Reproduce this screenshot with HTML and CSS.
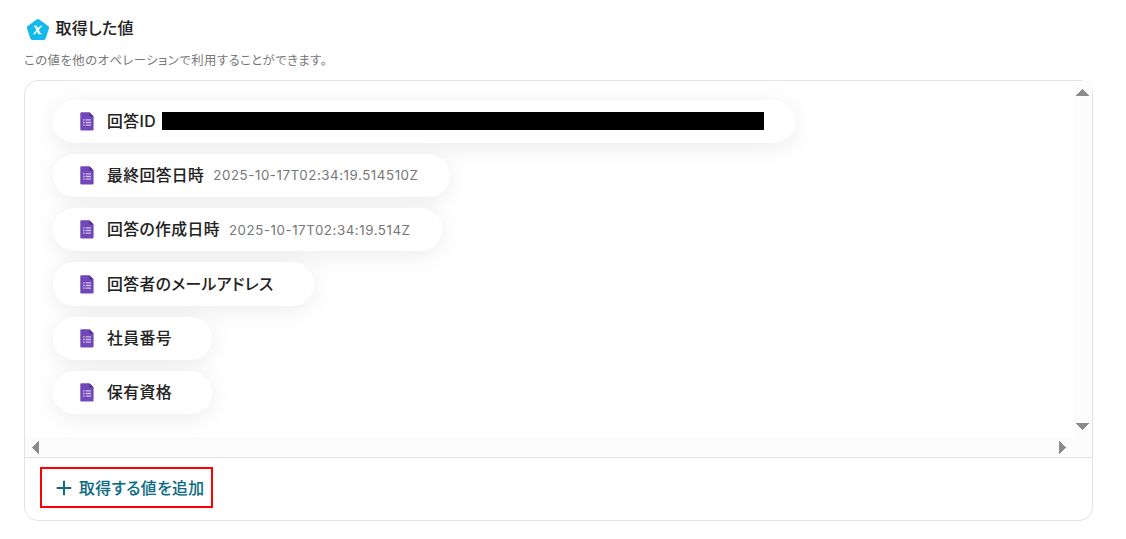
FILE: index.html
```html
<!DOCTYPE html>
<html lang="ja">
<head>
  <meta charset="UTF-8" />
  <meta name="viewport" content="width=device-width, initial-scale=1.0"/>
  <title>取得した値</title>
  <link rel="stylesheet" href="styles.css">
</head>

<body>
  <!-- shared form icon -->
  <svg class="sprite" aria-hidden="true">
    <symbol id="form-icon" viewBox="0 0 14 19">
      <path d="M1.6 0.3H9.4L13.6 4.5V17.2Q13.6 18.6 12.2 18.6H1.6Q0.3 18.6 0.3 17.2V1.6Q0.3 0.3 1.6 0.3Z" fill="#7248b9"/>
      <path d="M9.4 0.3L13.6 4.5H9.4Z" fill="#50318f"/>
      <path d="M3 7.2H4.6V8.6H3ZM5.6 7.2H11V8.6H5.6ZM3 9.8H4.6V11.2H3ZM5.6 9.8H11V11.2H5.6ZM3 12.4H4.6V13.8H3ZM5.6 12.4H11V13.8H5.6Z" fill="#cdbfe8"/>
    </symbol>
  </svg>

  <div class="container">
    <div class="heading">
      <svg class="heading-icon" width="24" height="24" viewBox="0 0 24 24">
        <path d="M10.7 1.5Q12 0.6 13.3 1.5L22.2 7.9Q23.5 8.8 23 10.3L19.7 20.6Q19.2 22 17.7 22H6.3Q4.8 22 4.3 20.6L1 10.3Q0.5 8.8 1.8 7.9Z" fill="#14b9ec"/>
        <text class="variable-mark" x="11.4" y="16.4" text-anchor="middle">x</text>
      </svg>
      <h1>取得した値</h1>
    </div>
    <p class="description">この値を他のオペレーションで利用することができます。</p>

    <div class="panel">
      <div class="scroll-area">
        <div class="values">
          <div class="value-pill">
            <svg class="form-icon"><use href="#form-icon"/></svg>
            <span class="label">回答ID</span>
            <span class="masked"></span>
          </div>
          <div class="value-pill">
            <svg class="form-icon"><use href="#form-icon"/></svg>
            <span class="label">最終回答日時</span>
            <span class="sample">2025-10-17T02:34:19.514510Z</span>
          </div>
          <div class="value-pill">
            <svg class="form-icon"><use href="#form-icon"/></svg>
            <span class="label">回答の作成日時</span>
            <span class="sample">2025-10-17T02:34:19.514Z</span>
          </div>
          <div class="value-pill">
            <svg class="form-icon"><use href="#form-icon"/></svg>
            <span class="label">回答者のメールアドレス</span>
            <span class="sample"></span>
          </div>
          <div class="value-pill">
            <svg class="form-icon"><use href="#form-icon"/></svg>
            <span class="label">社員番号</span>
            <span class="sample"></span>
          </div>
          <div class="value-pill">
            <svg class="form-icon"><use href="#form-icon"/></svg>
            <span class="label">保有資格</span>
            <span class="sample"></span>
          </div>
        </div>
        <div class="scrollbar-y">
          <svg width="13" height="7" viewBox="0 0 13 7"><path d="M0 7L6.5 0L13 7Z"/></svg>
          <svg width="13" height="7" viewBox="0 0 13 7"><path d="M0 0H13L6.5 7Z"/></svg>
        </div>
        <div class="scrollbar-x">
          <svg width="7" height="13" viewBox="0 0 7 13"><path d="M7 0V13L0 6.5Z"/></svg>
          <svg width="7" height="13" viewBox="0 0 7 13"><path d="M0 0L7 6.5L0 13Z"/></svg>
        </div>
      </div>
      <div class="panel-footer">
        <button class="add-btn">
          <svg width="16" height="16" viewBox="0 0 16 16"><path d="M8 0.7V15.3M0.7 8H15.3" stroke="currentColor" stroke-width="2"/></svg>
          取得する値を追加
        </button>
      </div>
    </div>
  </div>
</body>
</html>
```
FILE: styles.css
```css
* {
  box-sizing: border-box;
}

body {
  margin: 0;
  background: #fff;
  color: #222;
  font-family: Inter, "Noto Sans CJK JP", sans-serif;
  font-feature-settings: "palt";
}

.sprite {
  display: none;
}

.container {
  width: 1093px;
  padding: 16px 0 0 24px;
}

.heading {
  display: flex;
  align-items: center;
  gap: 6px;
  height: 25px;
  padding-left: 1.5px;
}

.heading-icon {
  margin-top: 3px;
}

.variable-mark {
  fill: #fff;
  stroke: #fff;
  stroke-width: 0.6px;
  font-family: "DejaVu Serif", serif;
  font-size: 14px;
  font-style: italic;
}

h1 {
  margin: 0 0 2px;
  font-size: 16px;
  font-weight: 500;
  line-height: 24px;
  letter-spacing: 0.3px;
  -webkit-text-stroke: 0.1px;
}

.description {
  margin: 9px 0 8px;
  height: 22px;
  font-size: 12.4px;
  line-height: 22px;
  letter-spacing: 0.45px;
  color: #777;
}

.panel {
  height: 441px;
  border: 1px solid #e3e3e3;
  border-radius: 14px;
}

.scroll-area {
  display: grid;
  grid-template-columns: 1fr 19px;
  grid-template-rows: 356px 20px;
  border-bottom: 1px solid #e3e3e3;
}

.values {
  display: flex;
  flex-direction: column;
  align-items: flex-start;
  gap: 11px;
  padding: 18.5px 0 0 28px;
  overflow: hidden;
}

.value-pill {
  display: flex;
  align-items: center;
  height: 43.3px;
  flex-shrink: 0;
  padding: 0 31.5px 0 27px;
  border-radius: 22px;
  background: #fff;
  box-shadow: 0 4px 24px rgba(0, 0, 0, 0.08);
}

.form-icon {
  width: 14px;
  height: 19px;
  margin-right: 13px;
}

.label {
  padding-top: 1px;
  font-size: 15.8px;
  font-weight: 500;
  line-height: 24px;
  letter-spacing: 0.42px;
  white-space: nowrap;
  -webkit-text-stroke: 0.1px;
}

.sample {
  margin-left: 9px;
  font-size: 13.3px;
  letter-spacing: 0.56px;
  color: #777;
}

.masked {
  width: 602px;
  height: 18px;
  margin-left: 6px;
  background: #000;
}

.scrollbar-y,
.scrollbar-x {
  display: flex;
  align-items: center;
  justify-content: space-between;
  background: #fcfcfc;
  fill: #8b8b8b;
  shape-rendering: crispEdges;
}

.scrollbar-y {
  flex-direction: column;
  padding: 8px 0 7px;
}

.scrollbar-x {
  grid-column: 1 / 3;
  padding: 0 26px 0 7px;
}

.panel-footer {
  padding: 9px 15px;
}

.add-btn {
  display: flex;
  align-items: center;
  gap: 7px;
  width: 173px;
  height: 41px;
  padding: 0 0 0 14px;
  border: 2px solid #f00;
  background: #fff;
  color: #0b6b83;
  font-family: inherit;
  font-feature-settings: inherit;
  font-size: 15.8px;
  font-weight: 500;
  letter-spacing: 0.45px;
  white-space: nowrap;
  -webkit-text-stroke: 0.1px;
}
```
